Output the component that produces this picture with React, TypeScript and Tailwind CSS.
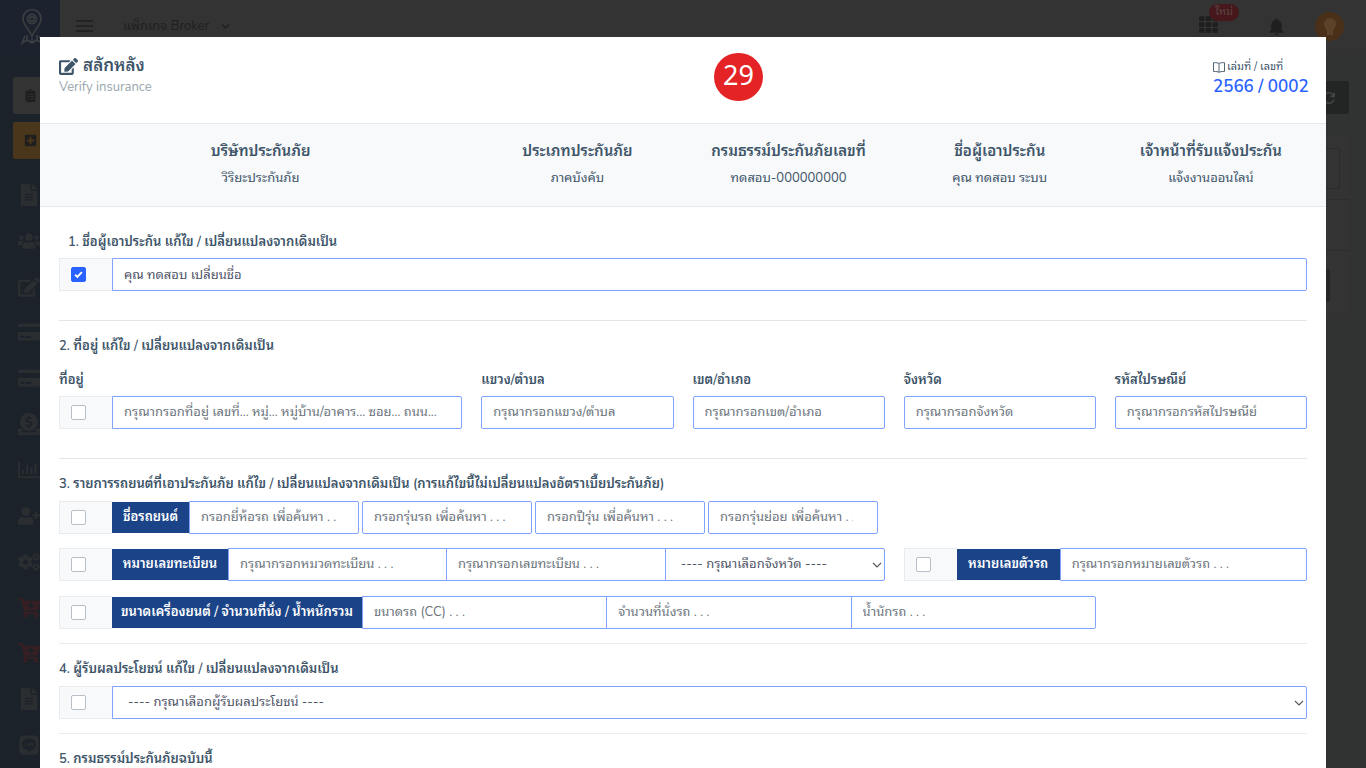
import type { ReactNode } from "react";
import {
  FaCartPlus, FaChevronDown, FaClipboardList, FaCogs, FaCreditCard, FaDonate, FaEdit,
  FaFileAlt, FaLine, FaPlusSquare, FaRegChartBar, FaTh, FaUserPlus, FaUsers,
} from "react-icons/fa";
import { MdNotifications, MdRefresh } from "react-icons/md";

const ring = "border border-[#7fa3ff] bg-white";

const menu = [
  { label: "เอกสาร", icon: FaFileAlt },
  { label: "ลูกค้า", icon: FaUsers },
  { label: "สลักหลัง", icon: FaEdit },
  { label: "ชำระเงิน", icon: FaCreditCard },
  { label: "บัตรเครดิต", icon: FaCreditCard },
  { label: "การเงิน", icon: FaDonate },
  { label: "รายงาน", icon: FaRegChartBar },
  { label: "เพิ่มผู้ใช้", icon: FaUserPlus },
  { label: "ตั้งค่า", icon: FaCogs },
  { label: "สั่งซื้อ", icon: FaCartPlus, red: true },
  { label: "สั่งซื้อเพิ่ม", icon: FaCartPlus, red: true },
  { label: "คู่มือ", icon: FaFileAlt },
  { label: "LINE", icon: FaLine },
];

const summary = [
  { head: "บริษัทประกันภัย", value: "วิริยะประกันภัย", span: "col-span-4" },
  { head: "ประเภทประกันภัย", value: "ภาคบังคับ", span: "col-span-2" },
  { head: "กรมธรรม์ประกันภัยเลขที่", value: "ทดสอบ-000000000", span: "col-span-2" },
  { head: "ชื่อผู้เอาประกัน", value: "คุณ ทดสอบ ระบบ", span: "col-span-2" },
  { head: "เจ้าหน้าที่รับแจ้งประกัน", value: "แจ้งงานออนไลน์", span: "col-span-2" },
];

function Check({ label, checked = false }: { label: string; checked?: boolean }) {
  return (
    <span className="flex w-[53px] shrink-0 items-center border border-r-0 border-[#e9ecef] bg-[#f8f9fa] pl-[11px]">
      <input
        type="checkbox"
        aria-label={label}
        defaultChecked={checked}
        className="peer size-[15px] appearance-none rounded-xs border border-[#b8bfc6] bg-white checked:border-[#2962ff] checked:bg-[#2962ff]"
      />
      <svg viewBox="0 0 8 8" className="pointer-events-none -ml-3 hidden size-[9px] peer-checked:block">
        <path d="M1 4.200 3 6.200 7 1.800" fill="none" stroke="#fff" strokeWidth="1.7" />
      </svg>
    </span>
  );
}

function Field({ label, hint, value, className = "" }: { label: string; hint?: string; value?: string; className?: string }) {
  return (
    <input
      type="text"
      aria-label={label}
      placeholder={hint}
      defaultValue={value}
      className={`${ring} h-[33px] min-w-0 px-[11px] pb-0.5 text-[#4f5467] outline-none placeholder:text-[#6c757d] placeholder:opacity-100 ${className}`}
    />
  );
}

function Choice({ label, text, className = "" }: { label: string; text: string; className?: string }) {
  return (
    <span className={`relative flex min-w-0 flex-1 ${className}`}>
      <select aria-label={label} className={`${ring} h-[33px] w-full appearance-none rounded-r-xs pr-6 pl-[15px] text-[#4f5467] outline-none`}>
        <option>{text}</option>
      </select>
      <svg viewBox="0 0 10 6" className="pointer-events-none absolute top-[14px] right-[3px] h-[6px] w-[10px]">
        <path d="m1 1 4 4 4-4" fill="none" stroke="#555" strokeWidth="1.1" />
      </svg>
    </span>
  );
}

function Tag({ children, className }: { children: ReactNode; className: string }) {
  return (
    <span className={`my-px flex shrink-0 items-center justify-center bg-[#1a4388] font-semibold whitespace-nowrap text-white ${className}`}>
      {children}
    </span>
  );
}

function Title({ children, className = "" }: { children: ReactNode; className?: string }) {
  return <h2 className={`leading-5 font-semibold whitespace-nowrap ${className}`}>{children}</h2>;
}

function Address({ label, hint }: { label: string; hint: string }) {
  return (
    <label className="col-span-2 flex flex-col gap-[6px]">
      <span className="leading-5 font-semibold">{label}</span>
      <Field label={label} hint={hint} className="w-full rounded-xs" />
    </label>
  );
}

function Backdrop() {
  return (
    <div className="flex h-full bg-[#303332] text-[#1f1f1f]">
      <aside className="flex w-[60px] shrink-0 flex-col bg-[#1c222a]">
        <a href="#home" aria-label="หน้าแรก" className="flex h-[55px] items-start justify-center bg-[#1b222d] pt-2 pl-1">
          <svg viewBox="0 0 24 38" className="h-[38px] w-6" fill="none" stroke="#3c3f42" strokeWidth="1.6">
            <path d="M12 28C9 21 3 17 3 10.500a9 9 0 0 1 18 0C21 17 15 21 12 28Z" />
            <circle cx="12" cy="11" r="4.600" />
            <path d="M10 9h4v4h-4zM5 28l-3 7 5-3 5 3 5-3 5 3-3-7M7 27v5M17 27v5M12 30v5" />
          </svg>
        </a>
        <nav className="flex flex-1 flex-col items-stretch pt-[22px]">
          <a href="#list" aria-label="รายการ" className="ml-[13px] flex h-[37px] items-center rounded-l-xs bg-[#333] pl-[11px] text-[13px]"><FaClipboardList /></a>
          <a href="#new" aria-label="เพิ่มรายการ" className="mt-2 mb-[13px] ml-[13px] flex h-[37px] items-center rounded-l-xs bg-[#4a371b] pl-[11px] text-[13px]"><FaPlusSquare /></a>
          {menu.map(({ label, icon: Icon, red }) => (
            <a key={label} href="#menu" aria-label={label} className={`flex flex-1 items-center pl-[18px] text-[22px] ${red ? "text-[#351f22]" : "text-[#2b2e31]"}`}>
              <Icon />
            </a>
          ))}
        </nav>
      </aside>
      <div className="flex min-w-0 flex-1 flex-col">
        <header className="flex h-[55px] items-start bg-[#333] pr-[22px] pl-4">
          <button aria-label="เมนู" className="mt-5">
            <svg viewBox="0 0 17 12" className="h-3 w-[17px]" stroke="currentColor" strokeWidth="1.4"><path d="M0 1h17M0 6h17M0 11h17" /></svg>
          </button>
          <button className="mt-4 ml-[30px] flex items-center gap-3 text-[13px] leading-5">แพ็กเกจ Broker <FaChevronDown className="size-[9px]" /></button>
          <div className="ml-auto flex items-start">
            <button aria-label="แอป" className="relative mt-[15px] text-[19px]">
              <FaTh />
              <span className="absolute -top-[11px] left-[10px] flex h-[17px] w-[30px] items-center justify-center rounded-full bg-[#46181c] text-[11px] text-[#5a4446]">ใหม่</span>
            </button>
            <button aria-label="แจ้งเตือน" className="mt-4 ml-12 text-[21px]"><MdNotifications /></button>
            <button aria-label="บัญชี" className="mt-[12px] ml-7 flex size-[29px] items-center justify-center rounded-full bg-[#4a3018] text-[#5c4228]">
              <svg viewBox="0 0 14 18" className="h-[18px] w-[14px]"><path fill="currentColor" d="M7 0a6 6 0 0 1 6 6c0 4-3 5-3 8v3H4v-3C4 11 1 10 1 6a6 6 0 0 1 6-6Z" /></svg>
            </button>
          </div>
        </header>
        <main className="mr-[17px] flex flex-col items-end pt-[26px]">
          <button aria-label="รีเฟรช" className="flex h-[33px] w-10 items-center justify-center rounded-xs bg-[#222524] text-[18px] text-[#424645]"><MdRefresh /></button>
          <div className="mt-[22px] flex w-full flex-col items-end bg-[#323332]">
            <div className="mt-3 mr-[9px] h-[41px] w-20 rounded-xs border border-[#292b2a]" />
            <div className="mt-[10px] h-[52px] w-full border-y border-[#2c2e2d]" />
            <div className="mt-[18px] mr-[19px] mb-4 h-[33px] w-20 rounded-xs bg-[#252726]" />
          </div>
        </main>
      </div>
    </div>
  );
}

export default function App() {
  return (
    <div className="relative h-screen overflow-hidden bg-[#303332] font-['Nunito','Noto_Sans_Thai_Looped','Loma','Waree','Garuda','Umpush',sans-serif] text-[13px] text-[#3e5569]">
      <div className="h-full">
        <Backdrop />
      </div>

      <section role="dialog" aria-label="สลักหลัง" className="absolute inset-x-10 top-[37px] bottom-0 overflow-hidden bg-white">
        <header className="flex h-[86px] justify-between px-[19px] pt-[18px]">
          <div>
            <h1 className="flex items-center gap-[5px] text-[17px] leading-[22px] font-semibold"><FaEdit className="text-[19px]" />สลักหลัง</h1>
            <p className="leading-5 text-[#98a6ad]">Verify insurance</p>
          </div>
          <div className="w-[94px] pt-[3px]">
            <p className="flex items-center gap-[2px] text-[11px] leading-[18px] whitespace-nowrap">
              <svg viewBox="0 0 12 11" className="h-[11px] w-3" fill="none" stroke="currentColor" strokeWidth="0.9">
                <path d="M6 1.500C5 .8 3.500.6.500.7v8.800c3 0 4.500.1 5.500.9 1-.8 2.500-.9 5.500-.9V.7C8.500.6 7 .8 6 1.500Zm0 0v8.800" />
              </svg>
              เล่มที่ / เลขที่
            </p>
            <p className="text-[17px] leading-[22px] font-semibold whitespace-nowrap text-[#2962ff]">2566 / 0002</p>
          </div>
        </header>

        <dl className="grid h-[84px] grid-cols-12 gap-x-[19px] border-y border-[#e6e9eb] bg-[#f8f9fb] px-[19px] pt-4 text-center">
          {summary.map((s) => (
            <div key={s.head} className={`${s.span} whitespace-nowrap`}>
              <dt className="text-[15px] leading-[22px] font-semibold">{s.head}</dt>
              <dd className="mt-1 leading-6">{s.value}</dd>
            </div>
          ))}
        </dl>

        <form className="px-[19px] pt-[25px]">
          <Title className="pl-[9px]">1. ชื่อผู้เอาประกัน แก้ไข / เปลี่ยนแปลงจากเดิมเป็น</Title>
          <div className="mt-[6px] flex">
            <Check label="แก้ไขชื่อผู้เอาประกัน" checked />
            <Field label="ชื่อผู้เอาประกัน" value="คุณ ทดสอบ เปลี่ยนชื่อ" className="flex-1 rounded-r-xs" />
          </div>
          <hr className="mt-[29px] mb-[15px] border-[#e4e6e8]" />

          <Title>2. ที่อยู่ แก้ไข / เปลี่ยนแปลงจากเดิมเป็น</Title>
          <div className="mt-[14px] grid grid-cols-12 gap-x-[19px]">
            <div className="col-span-4 flex flex-col gap-[6px]">
              <span className="leading-5 font-semibold">ที่อยู่</span>
              <div className="flex">
                <Check label="แก้ไขที่อยู่" />
                <Field label="ที่อยู่" hint="กรุณากรอกที่อยู่ เลขที่... หมู่... หมู่บ้าน/อาคาร... ซอย... ถนน..." className="flex-1 rounded-r-xs" />
              </div>
            </div>
            <Address label="แขวง/ตำบล" hint="กรุณากรอกแขวง/ตำบล" />
            <Address label="เขต/อำเภอ" hint="กรุณากรอกเขต/อำเภอ" />
            <Address label="จังหวัด" hint="กรุณากรอกจังหวัด" />
            <Address label="รหัสไปรษณีย์" hint="กรุณากรอกรหัสไปรษณีย์" />
          </div>
          <hr className="mt-[29px] mb-[15px] border-[#e4e6e8]" />

          <Title>3. รายการรถยนต์ที่เอาประกันภัย แก้ไข / เปลี่ยนแปลงจากเดิมเป็น (การแก้ไขนี้ไม่เปลี่ยนแปลงอัตราเบี้ยประกันภัย)</Title>
          <div className="mt-[7px] flex gap-[3px]">
            <div className="flex">
              <Check label="แก้ไขชื่อรถยนต์" />
              <Tag className="w-[77px]">ชื่อรถยนต์</Tag>
              <Field label="ยี่ห้อรถ" hint="กรอกยี่ห้อรถ เพื่อค้นหา . . ." className="w-[170px] rounded-r-xs pr-5" />
            </div>
            <Field label="รุ่นรถ" hint="กรอกรุ่นรถ เพื่อค้นหา . . ." className="w-[170px] rounded-xs pr-5" />
            <Field label="ปีรุ่น" hint="กรอกปีรุ่น เพื่อค้นหา . . ." className="w-[170px] rounded-xs pr-5" />
            <Field label="รุ่นย่อย" hint="กรอกรุ่นย่อย เพื่อค้นหา . . ." className="w-[170px] rounded-xs pr-6" />
          </div>
          <div className="mt-[14px] grid grid-cols-12 gap-x-[19px]">
            <div className="col-span-8 flex">
              <Check label="แก้ไขหมายเลขทะเบียน" />
              <Tag className="w-[116px]">หมายเลขทะเบียน</Tag>
              <div className="grid flex-1 grid-cols-3">
                <Field label="หมวดทะเบียน" hint="กรุณากรอกหมวดทะเบียน . . ." />
                <Field label="เลขทะเบียน" hint="กรุณากรอกเลขทะเบียน . . ." className="-ml-px" />
                <Choice label="จังหวัดทะเบียน" text="---- กรุณาเลือกจังหวัด ----" className="-ml-px" />
              </div>
            </div>
            <div className="col-span-4 flex">
              <Check label="แก้ไขหมายเลขตัวรถ" />
              <Tag className="w-[103px]">หมายเลขตัวรถ</Tag>
              <Field label="หมายเลขตัวรถ" hint="กรุณากรอกหมายเลขตัวรถ . . ." className="flex-1 rounded-r-xs" />
            </div>
          </div>
          <div className="mt-[15px] grid grid-cols-12 gap-x-[19px]">
            <div className="col-span-10 flex">
              <Check label="แก้ไขขนาดเครื่องยนต์" />
              <Tag className="w-[250px]">ขนาดเครื่องยนต์ / จำนวนที่นั่ง / น้ำหนักรวม</Tag>
              <Field label="ขนาดรถ" hint="ขนาดรถ (CC) . . ." className="flex-1" />
              <Field label="จำนวนที่นั่งรถ" hint="จำนวนที่นั่งรถ . . ." className="-ml-px flex-1" />
              <Field label="น้ำหนักรถ" hint="น้ำนักรถ . . ." className="-ml-px flex-1 rounded-r-xs" />
            </div>
          </div>
          <hr className="mt-[14px] mb-[15px] border-[#e9ebed]" />

          <Title>4. ผู้รับผลประโยชน์ แก้ไข / เปลี่ยนแปลงจากเดิมเป็น</Title>
          <div className="mt-[7px] flex">
            <Check label="แก้ไขผู้รับผลประโยชน์" />
            <Choice label="ผู้รับผลประโยชน์" text="---- กรุณาเลือกผู้รับผลประโยชน์ ----" />
          </div>
          <hr className="mt-[14px] mb-[15px] border-[#e9ebed]" />

          <Title>5. กรมธรรม์ประกันภัยฉบับนี้</Title>
        </form>
      </section>

      <span className="absolute top-[53px] left-[714px] flex h-12 w-[49px] items-center justify-center rounded-full bg-[#e42326] pb-[3px] font-['Noto_Sans',sans-serif] text-[27px] text-white">29</span>
    </div>
  );
}
